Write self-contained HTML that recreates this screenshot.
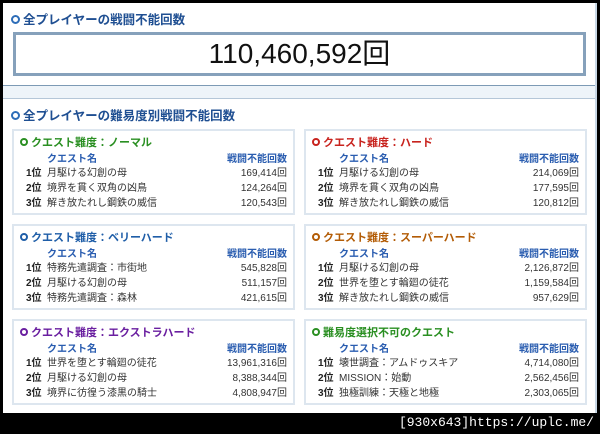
<!DOCTYPE html>
<html><head><meta charset="utf-8"><style>
*{margin:0;padding:0;box-sizing:border-box}
body{width:600px;height:434px;background:#000;position:relative;overflow:hidden;font-family:"Liberation Sans","Noto Sans CJK JP",sans-serif}
.page{position:absolute;left:3px;top:3px;width:594px;height:410px;background:#eef4f9;border-right:2px solid #c9d8e6}
.sec1{position:absolute;left:0;top:0;width:592px;height:83px;background:#fff;border-bottom:1px solid #7d9ab5}
.sec2{position:absolute;left:0;top:95px;width:592px;height:315px;background:#fff;border-top:1px solid #b5c7d8}
.h{position:absolute;left:8px;font-size:12.5px;font-weight:bold;color:#1f4f92;white-space:nowrap}
.dot{display:inline-block;width:9px;height:9px;border-radius:50%;border:2px solid currentColor;background:#fff;margin-right:3px;vertical-align:0px}
.num{position:absolute;left:10px;top:29px;width:573px;height:44px;border:3px solid #86a1bb;text-align:center;font-size:28px;line-height:38px;color:#111}
.card{position:absolute;width:283px;height:86px;border:2px solid #dde6ef;background:#fff}
.t{position:absolute;left:6px;top:3px;font-size:11px;font-weight:bold;white-space:nowrap}
.t .dot{width:8px;height:8px;border-width:2px}
.hd{position:absolute;top:19px;font-size:10px;font-weight:bold;color:#2a5db0}
.r{position:absolute;left:0;width:279px;font-size:10px;color:#333;height:14px;white-space:nowrap}
.r b{position:absolute;left:12px;color:#222}
.r span{position:absolute;left:33px}
.r i{position:absolute;right:6px;font-style:normal}
.foot{position:absolute;right:6px;top:415px;color:#fff;font-family:"Liberation Mono",monospace;font-size:13px}
</style></head><body>
<div class="page">
<div class="sec1">
<div class="h" style="top:6px"><span class="dot" style="color:#2d6db8"></span>全プレイヤーの戦闘不能回数</div>
<div class="num">110,460,592回</div>
</div>
<div class="sec2">
<div class="h" style="top:6px"><span class="dot" style="color:#2d6db8"></span>全プレイヤーの難易度別戦闘不能回数</div>
</div>
</div>

<div class="card" style="left:12px;top:129px">
<div class="t" style="color:#2a8f22"><span class="dot"></span>クエスト難度：ノーマル</div>
<div class="hd" style="left:33px">クエスト名</div><div class="hd" style="right:6px">戦闘不能回数</div>
<div class="r" style="top:33px"><b>1位</b><span>月駆ける幻創の母</span><i>169,414回</i></div>
<div class="r" style="top:48px"><b>2位</b><span>境界を貫く双角の凶鳥</span><i>124,264回</i></div>
<div class="r" style="top:63px"><b>3位</b><span>解き放たれし鋼鉄の威信</span><i>120,543回</i></div>
</div>
<div class="card" style="left:304px;top:129px">
<div class="t" style="color:#c8231e"><span class="dot"></span>クエスト難度：ハード</div>
<div class="hd" style="left:33px">クエスト名</div><div class="hd" style="right:6px">戦闘不能回数</div>
<div class="r" style="top:33px"><b>1位</b><span>月駆ける幻創の母</span><i>214,069回</i></div>
<div class="r" style="top:48px"><b>2位</b><span>境界を貫く双角の凶鳥</span><i>177,595回</i></div>
<div class="r" style="top:63px"><b>3位</b><span>解き放たれし鋼鉄の威信</span><i>120,812回</i></div>
</div>
<div class="card" style="left:12px;top:224px">
<div class="t" style="color:#1f5ea8"><span class="dot"></span>クエスト難度：ベリーハード</div>
<div class="hd" style="left:33px">クエスト名</div><div class="hd" style="right:6px">戦闘不能回数</div>
<div class="r" style="top:33px"><b>1位</b><span>特務先遣調査：市街地</span><i>545,828回</i></div>
<div class="r" style="top:48px"><b>2位</b><span>月駆ける幻創の母</span><i>511,157回</i></div>
<div class="r" style="top:63px"><b>3位</b><span>特務先遣調査：森林</span><i>421,615回</i></div>
</div>
<div class="card" style="left:304px;top:224px">
<div class="t" style="color:#b35c06"><span class="dot"></span>クエスト難度：スーパーハード</div>
<div class="hd" style="left:33px">クエスト名</div><div class="hd" style="right:6px">戦闘不能回数</div>
<div class="r" style="top:33px"><b>1位</b><span>月駆ける幻創の母</span><i>2,126,872回</i></div>
<div class="r" style="top:48px"><b>2位</b><span>世界を堕とす輪廻の徒花</span><i>1,159,584回</i></div>
<div class="r" style="top:63px"><b>3位</b><span>解き放たれし鋼鉄の威信</span><i>957,629回</i></div>
</div>
<div class="card" style="left:12px;top:319px">
<div class="t" style="color:#6a1fa0"><span class="dot"></span>クエスト難度：エクストラハード</div>
<div class="hd" style="left:33px">クエスト名</div><div class="hd" style="right:6px">戦闘不能回数</div>
<div class="r" style="top:33px"><b>1位</b><span>世界を堕とす輪廻の徒花</span><i>13,961,316回</i></div>
<div class="r" style="top:48px"><b>2位</b><span>月駆ける幻創の母</span><i>8,388,344回</i></div>
<div class="r" style="top:63px"><b>3位</b><span>境界に彷徨う漆黒の騎士</span><i>4,808,947回</i></div>
</div>
<div class="card" style="left:304px;top:319px">
<div class="t" style="color:#2a8f22"><span class="dot"></span>難易度選択不可のクエスト</div>
<div class="hd" style="left:33px">クエスト名</div><div class="hd" style="right:6px">戦闘不能回数</div>
<div class="r" style="top:33px"><b>1位</b><span>壊世調査：アムドゥスキア</span><i>4,714,080回</i></div>
<div class="r" style="top:48px"><b>2位</b><span>MISSION：始動</span><i>2,562,456回</i></div>
<div class="r" style="top:63px"><b>3位</b><span>独極訓練：天極と地極</span><i>2,303,065回</i></div>
</div>
<div class="foot">[930x643]https://uplc.me/</div>
</body></html>
